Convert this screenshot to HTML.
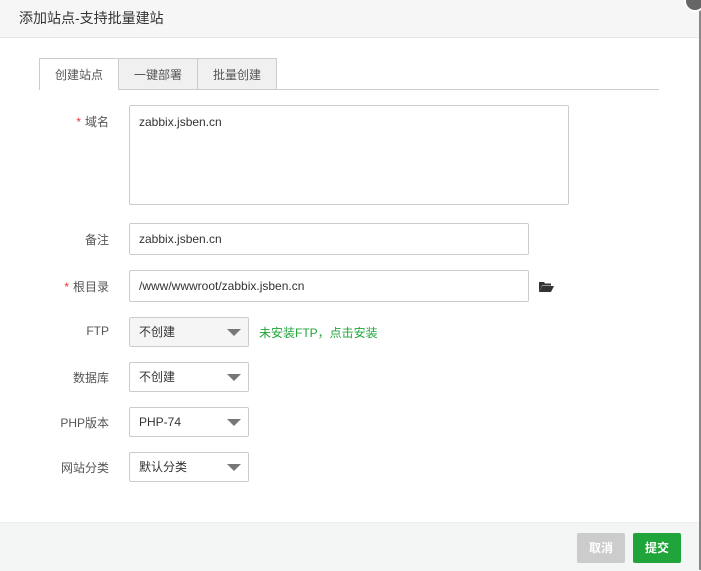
<!DOCTYPE html>
<html><head><meta charset="utf-8"><style>
body{margin:0;width:701px;height:570px;overflow:hidden;background:#fff;font-family:"Liberation Sans","Noto Sans CJK SC",sans-serif;font-size:12px;color:#555;position:relative}
.hd{position:absolute;left:0;top:0;width:699px;height:37px;background:#f6f6f6;border-bottom:1px solid #e6e6e6;font-size:14px;color:#333;line-height:36px;text-indent:19px}
.vl{position:absolute;left:699px;top:8px;width:2px;height:562px;background:#888}
.cl{position:absolute;left:684px;top:-10px;width:18px;height:18px;border-radius:50%;background:#666;border:2px solid #fff}
.tabs{position:absolute;left:39px;top:89px;width:620px;border-top:1px solid #ccc}
.tab{position:absolute;top:58px;height:31px;width:78px;border:1px solid #ccc;border-bottom:none;background:#f0f0f0;text-align:center;line-height:32px;color:#555;font-size:12px;box-sizing:border-box}
.lab{position:absolute;width:109px;text-align:right;left:0;color:#555}
.lab i{color:#e33;font-style:normal;margin-right:4px}
.in{position:absolute;left:129px;border:1px solid #ccc;border-radius:2px;box-sizing:border-box;padding-left:9px;color:#333;font-size:12px}
.sel{position:absolute;left:129px;width:120px;height:30px;border:1px solid #ccc;border-radius:2px;box-sizing:border-box;padding-left:9px;line-height:28px;color:#333}
.sel:after{content:"";position:absolute;right:7px;top:11px;border-left:7px solid transparent;border-right:7px solid transparent;border-top:7px solid #777}
.ft{position:absolute;left:0;top:522px;width:699px;height:48px;background:#f4f5f5;border-top:1px solid #eee}
.btn{position:absolute;top:533px;height:30px;width:48px;border-radius:2px;color:#fff;font-weight:bold;text-align:center;line-height:30px;font-size:12px}
</style></head><body>
<div class="hd">添加站点-支持批量建站</div>
<div class="vl"></div><div class="cl"></div>
<div class="tabs"></div>
<div class="tab" style="left:39px;width:80px;background:#fff;height:32px">创建站点</div>
<div class="tab" style="left:118px;width:80px">一键部署</div>
<div class="tab" style="left:197px;width:80px">批量创建</div>

<div class="lab" style="top:113px"><i>*</i>域名</div>
<div class="in" style="top:105px;width:440px;height:100px;padding-top:8px;line-height:16px">zabbix.jsben.cn</div>
<div class="lab" style="top:231px">备注</div>
<div class="in" style="top:223px;width:400px;height:32px;line-height:30px">zabbix.jsben.cn</div>
<div class="lab" style="top:278px"><i>*</i>根目录</div>
<div class="in" style="top:270px;width:400px;height:32px;line-height:30px">/www/wwwroot/zabbix.jsben.cn</div>
<svg style="position:absolute;left:538px;top:280px" width="16" height="13" viewBox="0 0 16 13"><path d="M1 2h5l1 1.5h6v2H4L1 12z" fill="#333"/><path d="M4 6h12l-3 6H1z" fill="#333"/></svg>

<div class="lab" style="top:324px">FTP</div>
<div class="sel" style="top:317px;background:#f5f5f5">不创建</div>
<div style="position:absolute;left:259px;top:324px;color:#20a53a">未安装FTP，点击安装</div>
<div class="lab" style="top:369px">数据库</div>
<div class="sel" style="top:362px">不创建</div>
<div class="lab" style="top:414px">PHP版本</div>
<div class="sel" style="top:407px">PHP-74</div>
<div class="lab" style="top:459px">网站分类</div>
<div class="sel" style="top:452px">默认分类</div>

<div class="ft"></div>
<div class="btn" style="left:577px;background:#ccc">取消</div>
<div class="btn" style="left:633px;background:#20a53a">提交</div>
</body></html>
